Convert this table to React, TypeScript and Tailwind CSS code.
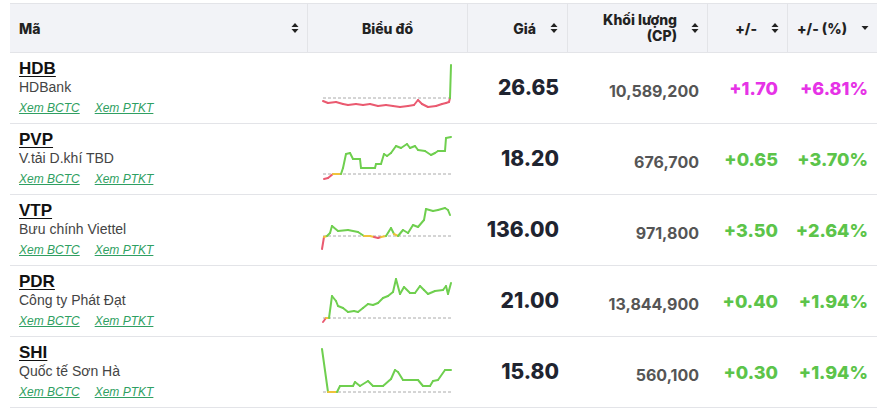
import React from 'react';

type Stock = {
  code: string;
  name: string;
  price: string;
  volume: string;
  change: string;
  pct: string;
  ceiling?: boolean;
  base: number;
  points: [number, number][];
};

const stocks: Stock[] = [
  {
    code: 'HDB',
    name: 'HDBank',
    price: '26.65',
    volume: '10,589,200',
    change: '+1.70',
    pct: '+6.81%',
    ceiling: true,
    base: 40,
    points: [
      [5, 43], [10, 45], [18, 44], [25, 46], [30, 47], [38, 46], [45, 47], [52, 46], [60, 48],
      [68, 47], [75, 48], [82, 49], [90, 48], [96, 47], [100, 42], [104, 46], [110, 49],
      [118, 48], [124, 46], [128, 45], [131, 44], [132, 40], [133, 7],
    ],
  },
  {
    code: 'PVP',
    name: 'V.tải D.khí TBD',
    price: '18.20',
    volume: '676,700',
    change: '+0.65',
    pct: '+3.70%',
    base: 45,
    points: [
      [6, 50], [10, 49], [15, 45], [17, 45], [23, 45], [25, 39], [28, 25], [32, 24], [35, 30],
      [42, 30], [43, 39], [57, 39], [58, 35], [63, 35], [66, 25], [69, 27], [73, 24], [78, 17],
      [83, 19], [89, 15], [92, 19], [97, 17], [100, 21], [107, 22], [113, 26], [117, 24],
      [120, 22], [127, 22], [128, 9], [133, 8],
    ],
  },
  {
    code: 'VTP',
    name: 'Bưu chính Viettel',
    price: '136.00',
    volume: '971,800',
    change: '+3.50',
    pct: '+2.64%',
    base: 36,
    points: [
      [4, 49], [6, 37], [9, 36], [12, 33], [14, 26], [20, 31], [30, 30], [40, 32], [46, 36],
      [52, 36], [56, 37], [60, 38], [63, 37], [68, 36], [73, 28], [76, 34], [80, 36], [85, 30],
      [90, 33], [95, 25], [100, 27], [106, 20], [108, 9], [115, 11], [120, 10], [127, 8],
      [130, 10], [132, 15],
    ],
  },
  {
    code: 'PDR',
    name: 'Công ty Phát Đạt',
    price: '21.00',
    volume: '13,844,900',
    change: '+0.40',
    pct: '+1.94%',
    base: 47,
    points: [
      [5, 51], [8, 47], [11, 47], [14, 25], [18, 30], [20, 35], [25, 37], [30, 41], [36, 40],
      [40, 41], [45, 37], [50, 33], [55, 34], [60, 32], [65, 27], [70, 25], [75, 21], [78, 8],
      [82, 23], [86, 16], [92, 22], [97, 22], [102, 15], [106, 19], [110, 23], [117, 20],
      [125, 19], [128, 15], [130, 23], [133, 12],
    ],
  },
  {
    code: 'SHI',
    name: 'Quốc tế Sơn Hà',
    price: '15.80',
    volume: '560,100',
    change: '+0.30',
    pct: '+1.94%',
    base: 50,
    points: [
      [4, 7], [10, 50], [19, 50], [22, 44], [35, 44], [37, 40], [42, 44], [50, 39], [55, 44],
      [65, 44], [73, 37], [77, 28], [80, 30], [85, 38], [100, 38], [105, 44], [112, 44],
      [115, 39], [120, 38], [127, 28], [133, 28],
    ],
  },
];

function SortIcon() {
  return (
    <svg width="8" height="12" viewBox="0 0 8 12" className="shrink-0">
      <path d="M4 1 L7.5 5 H0.5 Z" fill="#222" />
      <path d="M4 11 L7.5 7 H0.5 Z" fill="#222" />
    </svg>
  );
}

function CaretDown() {
  return (
    <svg width="8" height="6" viewBox="0 0 8 6" className="shrink-0">
      <path d="M0.5 1 H7.5 L4 5 Z" fill="#222" />
    </svg>
  );
}

function Sparkline({ base, points }: { base: number; points: [number, number][] }) {
  const colorFor = (y: number) => {
    if (y < base - 1) return '#6fcf4f';
    if (y > base + 1) return '#ea5a70';
    return '#f0c33a';
  };
  return (
    <svg width="140" height="60" viewBox="0 0 140 60">
      <line x1="5" y1={base} x2="133" y2={base} stroke="#aaa" strokeWidth="1" strokeDasharray="3 2" />
      {points.slice(1).map((p, i) => {
        const prev = points[i];
        const mid = (prev[1] + p[1]) / 2;
        return (
          <line
            key={i}
            x1={prev[0]}
            y1={prev[1]}
            x2={p[0]}
            y2={p[1]}
            stroke={colorFor(mid)}
            strokeWidth="2"
            strokeLinecap="round"
          />
        );
      })}
    </svg>
  );
}

const cols = 'grid grid-cols-[298px_160px_100px_140px_80px_89px]';

export default function App() {
  return (
    <div className="w-[887px] h-[408px] bg-white pl-[10px] pt-[3px] overflow-hidden">
      <div className="w-[867px]">
        {/* Header */}
        <div
          className={`${cols} h-[50px] bg-[#f2f3f7] border-y border-[#e3e4e8] text-[14px] font-extrabold text-[#222]`}
          style={{ fontFamily: 'Inter, sans-serif' }}
        >
          <div className="flex items-center justify-between pl-[9px] pr-[8px] border-r border-[#e3e4e8]">
            <span>Mã</span>
            <SortIcon />
          </div>
          <div className="flex items-center justify-center border-r border-[#e3e4e8]">Biểu đồ</div>
          <div className="flex items-center justify-end gap-[14px] pr-[9px] border-r border-[#e3e4e8]">
            <span>Giá</span>
            <SortIcon />
          </div>
          <div className="flex items-center justify-end gap-[14px] pr-[8px] border-r border-[#e3e4e8]">
            <span className="text-right leading-[16px]">
              Khối lượng
              <br />
              (CP)
            </span>
            <SortIcon />
          </div>
          <div className="flex items-center justify-end gap-[14px] pr-[8px] border-r border-[#e3e4e8]">
            <span>+/-</span>
            <SortIcon />
          </div>
          <div className="flex items-center justify-end gap-[14px] pr-[8px]">
            <span>+/- (%)</span>
            <CaretDown />
          </div>
        </div>

        {/* Rows */}
        {stocks.map((s) => {
          const changeColor = s.ceiling ? 'text-[#e633e6]' : 'text-[#5cc44a]';
          return (
            <div key={s.code} className={`${cols} h-[71px] border-b border-[#e3e4e8]`}>
              <div className="pl-[9px] pt-[7px]" style={{ fontFamily: '"Liberation Sans", Arial, sans-serif' }}>
                <div className="text-[17px] leading-[18px] font-bold text-[#111] underline underline-offset-[2px]">
                  {s.code}
                </div>
                <div className="text-[14px] leading-[18px] text-[#444]">{s.name}</div>
                <div className="mt-[4px] flex gap-[15px] text-[12px] leading-[16px] italic text-[#2f9f62] underline">
                  <span>Xem BCTC</span>
                  <span>Xem PTKT</span>
                </div>
              </div>
              <div className="flex items-center justify-center">
                <Sparkline base={s.base} points={s.points} />
              </div>
              <div
                className="flex items-center justify-end pr-[9px] text-[21px] font-extrabold text-[#1f2430]"
                style={{ fontFamily: 'Inter, sans-serif' }}
              >
                {s.price}
              </div>
              <div
                className="flex items-center justify-end pr-[9px] pt-[5px] text-[16px] font-bold text-[#555]"
                style={{ fontFamily: 'Inter, sans-serif' }}
              >
                {s.volume}
              </div>
              <div
                className={`flex items-center justify-end pr-[10px] text-[18px] font-extrabold ${changeColor}`}
                style={{ fontFamily: 'Inter, sans-serif' }}
              >
                {s.change}
              </div>
              <div
                className={`flex items-center justify-end pr-[9px] text-[18px] font-extrabold ${changeColor}`}
                style={{ fontFamily: 'Inter, sans-serif' }}
              >
                {s.pct}
              </div>
            </div>
          );
        })}
      </div>
    </div>
  );
}
